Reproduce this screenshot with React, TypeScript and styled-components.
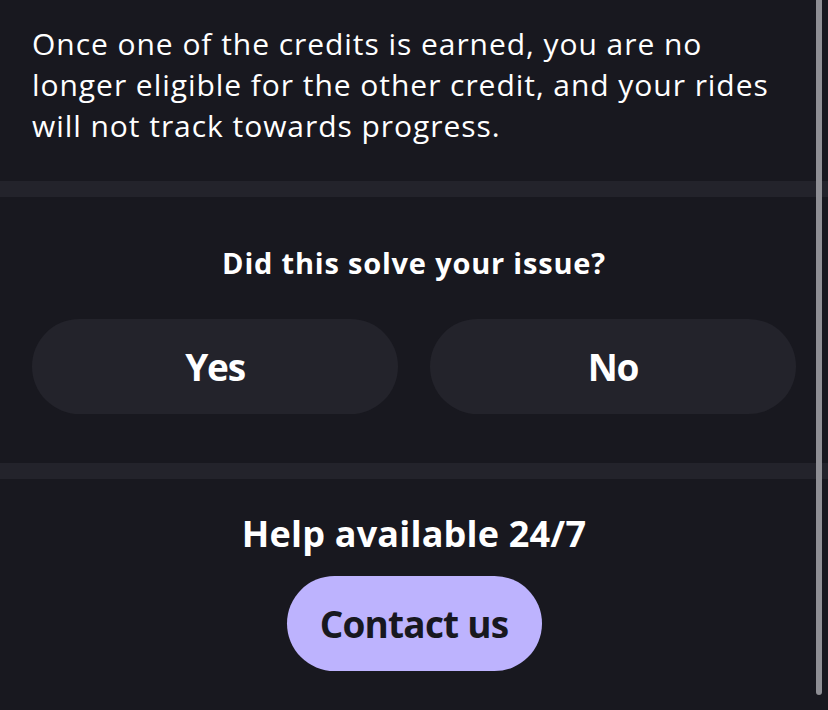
import React from "react";
import styled, { createGlobalStyle } from "styled-components";

const GlobalStyle = createGlobalStyle`
  html, body {
    margin: 0;
    padding: 0;
    background: #18181f;
  }
  body {
    font-family: "Open Sans", Lato, sans-serif;
    color: #ffffff;
    overflow: hidden;
  }
`;

const Page = styled.div`
  position: relative;
  width: 828px;
  height: 710px;
  background: #18181f;
  overflow: hidden;
`;

const Answer = styled.section`
  padding: 23px 32px 35px;
`;

const Paragraph = styled.p`
  margin: 0;
  font-size: 30px;
  line-height: 41px;
  font-weight: 400;
  letter-spacing: 0.95px;
  color: #ffffff;
`;

const Divider = styled.div`
  height: 16px;
  background: #23232b;
`;

const Feedback = styled.section`
  padding: 49px 32px 49px;
  display: flex;
  flex-direction: column;
  align-items: center;
  gap: 38px;
`;

const Title = styled.h2<{ $size: number; $track: number }>`
  margin: 0;
  font-size: ${p => p.$size}px;
  letter-spacing: ${p => p.$track}px;
  line-height: 1.2;
  font-weight: 700;
  color: #ffffff;
  text-align: center;
`;

const Choices = styled.div`
  display: grid;
  grid-template-columns: 1fr 1fr;
  gap: 32px;
  width: 100%;
`;

const Choice = styled.button`
  height: 95px;
  border: none;
  border-radius: 48px;
  background: #23232b;
  color: #ffffff;
  font-family: inherit;
  font-size: 37px;
  letter-spacing: -1.2px;
  font-weight: 700;
  cursor: pointer;
`;

const Help = styled.section`
  padding: 33px 32px 0;
  display: flex;
  flex-direction: column;
  align-items: center;
  gap: 21px;
`;

const ContactButton = styled.button`
  width: 255px;
  height: 95px;
  border: none;
  border-radius: 48px;
  background: #bdb3fe;
  color: #18181f;
  font-family: inherit;
  font-size: 37px;
  letter-spacing: -0.8px;
  font-weight: 700;
  cursor: pointer;
`;

const ScrollThumb = styled.div`
  position: absolute;
  top: 0;
  right: 6px;
  width: 6px;
  height: 695px;
  border-radius: 0 0 3px 3px;
  background: #8e8e94;
`;

export default function App() {
  return (
    <>
      <GlobalStyle />
      <Page>
        <Answer>
          <Paragraph>
            Once one of the credits is earned, you are no longer eligible for
            the other credit, and your rides will not track towards progress.
          </Paragraph>
        </Answer>
        <Divider />
        <Feedback>
          <Title $size={29} $track={0.8}>
            Did this solve your issue?
          </Title>
          <Choices>
            <Choice>Yes</Choice>
            <Choice>No</Choice>
          </Choices>
        </Feedback>
        <Divider />
        <Help>
          <Title $size={36} $track={0.2}>
            Help available 24/7
          </Title>
          <ContactButton>Contact us</ContactButton>
        </Help>
        <ScrollThumb />
      </Page>
    </>
  );
}
